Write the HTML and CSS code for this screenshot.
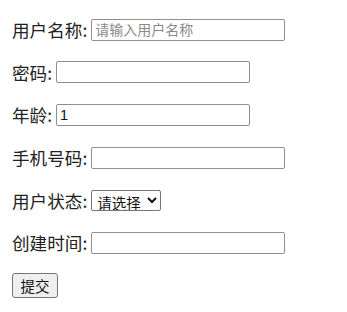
FILE: index.html
```html
<!DOCTYPE html>
<html lang="zh">
<head>
    <meta charset="UTF-8">
    <title>用户表单</title>
    <link rel="stylesheet" href="styles.css">
</head>
<body>
    <form class="userForm">
        <div class="row">
            <label>用户名称:</label>
            <input class="field" type="text" placeholder="请输入用户名称">
        </div>
        <div class="row">
            <label>密码:</label>
            <input class="field" type="password">
        </div>
        <div class="row">
            <label>年龄:</label>
            <input class="field" type="text" value="1">
        </div>
        <div class="row">
            <label>手机号码:</label>
            <input class="field" type="text">
        </div>
        <div class="row">
            <label>用户状态:</label>
            <select class="choose">
                <option>请选择</option>
                <option>正常</option>
                <option>停用</option>
            </select>
        </div>
        <div class="row">
            <label>创建时间:</label>
            <input class="field" type="text">
        </div>
        <div class="row">
            <button class="submit" type="button">提交</button>
        </div>
    </form>
</body>
</html>
```

FILE: styles.css
```css
*{margin:0;padding:0;box-sizing:border-box;}
html,body{
    background:#fff;
}
body{
    font-family:"Noto Sans CJK SC","Liberation Sans",sans-serif;
    font-size:17.6px;
    color:#222;
}
.userForm{
    display:flex;
    flex-direction:column;
    gap:17.4px;
    padding:17px 0 0 12px;
}
.row{
    height:25.3px;
    display:flex;
    align-items:center;
}
.row label{
    margin-right:4px;
    line-height:1;
}
.field{
    width:194px;
    height:22px;
    border:1px solid #8f8f8f;
    border-radius:2px;
    padding:0 3px;
    font-family:"Liberation Sans","Noto Sans CJK SC",sans-serif;
    font-size:14.5px;
    color:#111;
    background:#fff;
}
.field::placeholder{
    color:#8a8a8a;
    font-family:"Noto Sans CJK SC",sans-serif;
    font-size:14px;
}
.choose{
    width:70px;
    height:21px;
    border:1px solid #767676;
    border-radius:2px;
    font-family:"Noto Sans CJK SC",sans-serif;
    font-size:14.5px;
    color:#111;
    background:#fff;
    padding-left:1px;
}
.submit{
    width:46px;
    height:25px;
    border:1px solid #767676;
    border-radius:3px;
    background:#efefef;
    font-family:"Noto Sans CJK SC",sans-serif;
    font-size:14.5px;
    color:#111;
}
```
